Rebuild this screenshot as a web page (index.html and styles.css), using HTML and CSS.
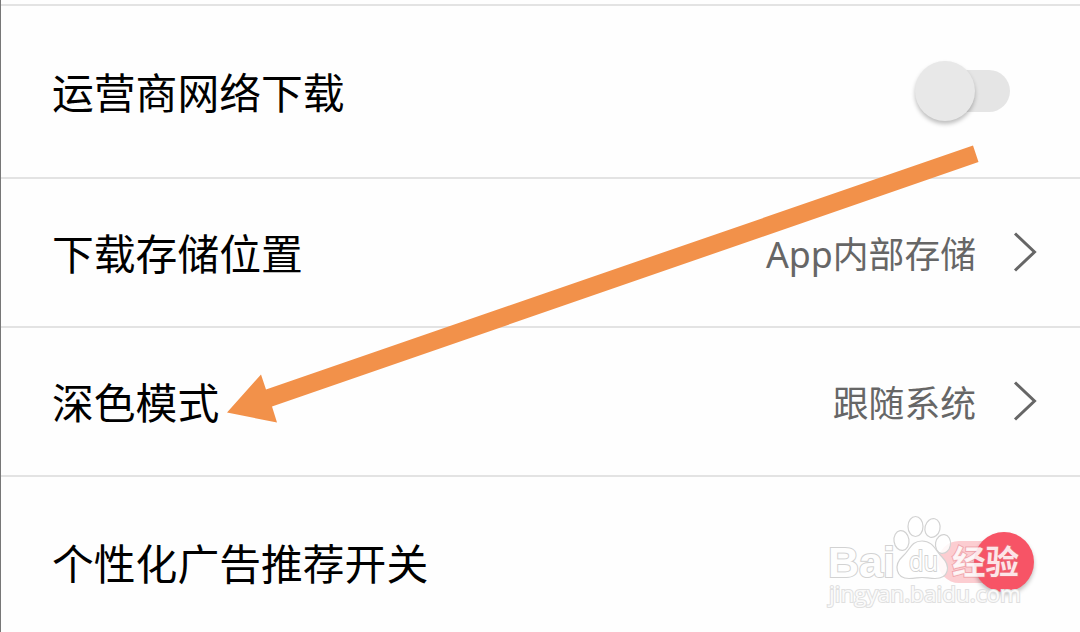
FILE: index.html
```html
<!DOCTYPE html>
<html lang="zh-CN">
  <head>
    <meta charset="utf-8" />
    <meta name="viewport" content="width=device-width, initial-scale=1.0" />
    <title>设置</title>
    <link rel="stylesheet" href="styles.css">
  </head>
  <body>
    <main class="settings">
      <div class="row row-tall">
        <span class="label">运营商网络下载</span>
        <span class="switch"><span class="knob"></span></span>
      </div>
      <div class="row">
        <span class="label">下载存储位置</span>
        <span class="value">App内部存储</span>
        <svg class="chevron" viewBox="0 0 24 40">
          <path d="M2 1.5 L21.5 20 L2 38.5" />
        </svg>
      </div>
      <div class="row">
        <span class="label">深色模式</span>
        <span class="value">跟随系统</span>
        <svg class="chevron" viewBox="0 0 24 40">
          <path d="M2 1.5 L21.5 20 L2 38.5" />
        </svg>
      </div>
      <div class="row row-tall">
        <span class="label">个性化广告推荐开关</span>
        <span class="switch on"><span class="knob"></span></span>
      </div>
    </main>

    <!-- Arrow pointing at the dark mode row -->
    <svg class="arrow" viewBox="0 0 1080 632">
      <path d="M227 412.5 L261 374.5 L266 389.5 L973 145.5 L978.5 162 L272 406.5 L277 422.5 Z" />
    </svg>

    <!-- Watermark -->
    <svg class="watermark" viewBox="820 500 220 120">
      <text class="wm-brand" x="828" y="577" textLength="67" lengthAdjust="spacingAndGlyphs">Bai</text>
      <g class="wm-paw">
        <ellipse cx="901.5" cy="540.5" rx="7.5" ry="10" transform="rotate(-8 901.5 540.5)" />
        <ellipse cx="915.5" cy="526.5" rx="7.5" ry="10" />
        <ellipse cx="932.5" cy="528" rx="7.5" ry="9.5" transform="rotate(14 932.5 528)" />
        <ellipse cx="943" cy="544" rx="7.5" ry="9.5" transform="rotate(10 943 544)" />
        <path d="M922 541 C911 541 910 550 903 556 C893 565 896 578.5 909 578.5 C915 578.5 918 577.5 922 577.5 C926 577.5 930 578.5 935 578.5 C949 578.5 951 566 942 557 C935 550 933 541 922 541 Z" />
      </g>
      <text class="wm-du" x="909" y="571" textLength="29" lengthAdjust="spacingAndGlyphs">du</text>
      <text class="wm-name" x="952" y="574" textLength="67" lengthAdjust="spacingAndGlyphs">经验</text>
      <text class="wm-url" x="829" y="602" textLength="192" lengthAdjust="spacingAndGlyphs">jingyan.baidu.com</text>
    </svg>
  </body>
</html>
```

FILE: styles.css
```css
body {
  margin: 0;
  width: 1080px;
  height: 632px;
  overflow: hidden;
  position: relative;
  background: #fefefe;
  font-family: "Noto Sans", "Noto Sans CJK SC", sans-serif;
}

/* Settings list */
.settings {
  box-sizing: border-box;
  height: 632px;
  padding-top: 4px;
  border-left: 1px solid #777;
  overflow: hidden;
}

.row {
  display: flex;
  align-items: center;
  box-sizing: border-box;
  height: 149px;
  padding: 0 43px 0 51px;
  border-top: 2px solid #e3e3e3;
}

.row-tall {
  height: 173px;
}

.label {
  flex: 1;
  padding-bottom: 2px;
  font-family: "Noto Sans CJK SC", sans-serif;
  font-size: 41.8px;
  line-height: 60px;
  color: #000;
}

.value {
  padding-top: 3px;
  font-size: 35.8px;
  line-height: 54px;
  color: #666;
}

.chevron {
  width: 24px;
  height: 40px;
  margin: 0 0 2px 37px;
}

.chevron path {
  fill: none;
  stroke: #666;
  stroke-width: 3;
}

/* Switches */
.switch {
  display: flex;
  align-items: center;
  width: 72px;
  height: 42px;
  margin: 0 27px 2px 0;
  border-radius: 21px;
  background: #e5e5e5;
}

.knob {
  flex: none;
  width: 60px;
  height: 60px;
  margin-left: -23px;
  border-radius: 50%;
  background: #e8e8e8;
  box-shadow: 0 3px 4px rgba(0, 0, 0, 0.25);
}

.switch.on {
  background: #fccdd1;
}

.switch.on .knob {
  margin-left: 36px;
  background: #f75466;
}

/* Overlays */
.arrow {
  position: absolute;
  top: 0;
  left: 0;
  width: 1080px;
  height: 632px;
  fill: #f2914a;
}

.watermark {
  position: absolute;
  top: 500px;
  left: 820px;
  width: 220px;
  height: 120px;
}

.watermark text,
.wm-paw {
  fill: rgba(255, 255, 255, 0.85);
  stroke: #d2d2d2;
  stroke-width: 1.2;
}

.watermark text {
  paint-order: stroke;
  stroke-width: 2;
}

.watermark .wm-brand {
  font: bold 43px "Liberation Sans", sans-serif;
  fill: #fefefe;
}

.watermark .wm-du {
  font: 28px "Open Sans", sans-serif;
  fill: #fefefe;
}

.watermark .wm-name {
  font: bold 33px "Noto Sans CJK SC", sans-serif;
  stroke: rgba(225, 120, 130, 0.45);
}

.watermark .wm-url {
  font: 22px "Open Sans", sans-serif;
  stroke: #e0e0e0;
}
```
